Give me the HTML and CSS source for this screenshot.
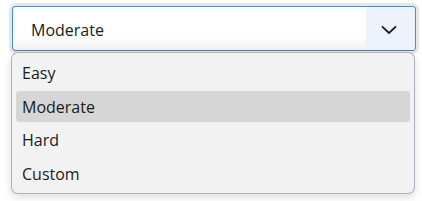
FILE: index.html
```html
<!DOCTYPE html>
<html lang="en">
<head>
  <meta charset="UTF-8" />
  <title>Difficulty select</title>
  <link rel="stylesheet" href="styles.css">
</head>
<body>

<!-- Выпадающий список сложности -->
<div class="combo">
  <div class="combo-ring">
    <div class="combo-box">
      <span class="combo-value">Moderate</span>
      <span class="combo-arrow">
        <svg width="16" height="10" viewBox="0 0 16 10">
          <path d="M1.5 1.8 L8 8 L14.5 1.8" fill="none" stroke="#1b1b1b" stroke-width="1.8" stroke-linecap="round" stroke-linejoin="round"/>
        </svg>
      </span>
    </div>
  </div>

  <ul class="combo-list">
    <li class="combo-item">Easy</li>
    <li class="combo-item selected">Moderate</li>
    <li class="combo-item">Hard</li>
    <li class="combo-item">Custom</li>
  </ul>
</div>

</body>
</html>
```

FILE: styles.css
```css
* {
  margin: 0;
  padding: 0;
  box-sizing: border-box;
}

body {
  font-family: 'Open Sans', 'Noto Sans', sans-serif;
  font-size: 16px;
  color: #1b1b1b;
  background: #ffffff;
}

.combo {
  position: relative;
  width: 422px;
  height: 201px;
  padding: 3px 3px 0 9px;
}

/* серое кольцо фокуса */
.combo-ring {
  width: 410px;
  padding: 3px;
  border-radius: 7px;
  background: #e6e6e6;
}

.combo-box {
  display: flex;
  align-items: stretch;
  height: 45px;
  border: 1px solid #3b8eea;
  border-bottom-color: #4f7fb8;
  border-radius: 4px;
  overflow: hidden;
  background: linear-gradient(to bottom, #ffffff 70%, #f1f1f1);
}

.combo-value {
  flex: 1;
  display: flex;
  align-items: center;
  padding: 2px 0 0 18px;
}

.combo-arrow {
  width: 49px;
  display: flex;
  align-items: center;
  justify-content: center;
  padding: 2px 4px 0 0;
  background: #eef3fb;
}

/* раскрытый список */
.combo-list {
  position: absolute;
  top: 52px;
  left: 11px;
  width: 404px;
  height: 142px;
  list-style: none;
  display: flex;
  flex-direction: column;
  gap: 2px;
  padding: 4px 4px 4px 4px;
  background: #f2f2f2;
  border: 1px solid #b4b4b4;
  border-right-color: #a9b0bf;
  border-radius: 7px;
  box-shadow: 0 3px 8px rgba(0, 0, 0, 0.14);
}

.combo-item {
  height: 32px;
  display: flex;
  align-items: center;
  padding: 1px 0 0 6px;
  border-radius: 3px;
}

.combo-item.selected {
  background: #d6d6d6;
}
```
